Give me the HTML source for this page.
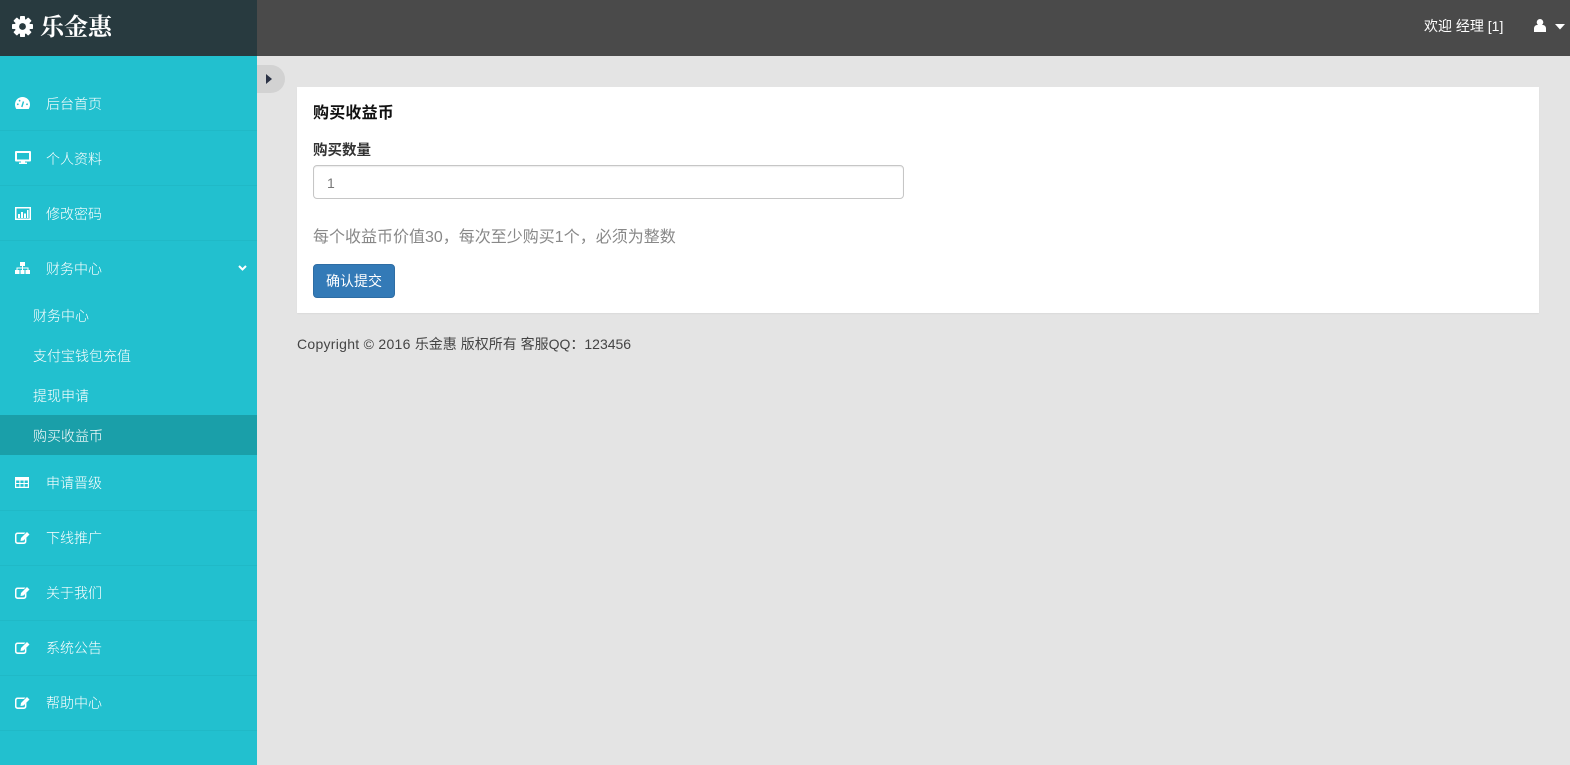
<!DOCTYPE html>
<html lang="zh-CN">
<head>
<meta charset="utf-8">
<title>购买收益币</title>
<style>
html,body{margin:0;padding:0;width:1570px;height:765px;overflow:hidden;background:#e4e4e4;}
body{position:relative;font-family:"Liberation Sans","Noto Sans CJK SC",sans-serif;font-size:14px;font-weight:300;color:#444;}
.a{position:absolute;white-space:nowrap;}
#top{left:257px;top:0;width:1313px;height:56px;background:#4a4a4a;}
#brand{left:0;top:0;width:257px;height:56px;background:#283a3f;}
#brandtext{left:40px;top:11px;font:bold 24px/34px "Liberation Serif","Noto Serif CJK SC",serif;color:#fff;}
#side{left:0;top:56px;width:257px;height:709px;background:#22c0cf;}
.line{left:0;width:257px;height:1px;background:#20b9c7;}
.m{color:#fff;font-size:14px;line-height:20px;left:46px;}
.s{color:#fff;font-size:14px;line-height:20px;left:33px;}
#active{left:0;top:415px;width:257px;height:40px;background:#1a9fa9;}
#toggle{left:257px;top:65px;width:28px;height:28px;background:#d2d2d2;border-radius:0 14px 14px 0;}
#panel{left:297px;top:87px;width:1242px;height:226px;background:#fff;box-shadow:0 1px 1px rgba(0,0,0,.04);}
#input{left:313px;top:165px;width:589px;height:32px;border:1px solid #c6c6c6;border-radius:4px;background:#fff;box-shadow:inset 0 1px 1px rgba(0,0,0,.075);}
#btn{left:313px;top:264px;width:80px;height:32px;background:#337ab7;border:1px solid #2e6da4;border-radius:4px;color:#fff;font-size:14px;font-weight:400;line-height:33px;text-align:center;}
</style>
</head>
<body>
<div class="a" id="top"></div>
<div class="a" id="brand"></div>
<svg class="a" style="left:12px;top:16px" width="21" height="21" viewBox="0 0 21 21"><g fill="#fff"><circle cx="10.500" cy="10.500" r="7.800"/><rect x="8" y="0" width="5" height="21" rx=".8"/><rect x="8" y="0" width="5" height="21" rx=".8" transform="rotate(45 10.500 10.500)"/><rect x="8" y="0" width="5" height="21" rx=".8" transform="rotate(90 10.500 10.500)"/><rect x="8" y="0" width="5" height="21" rx=".8" transform="rotate(135 10.500 10.500)"/></g><circle cx="10.500" cy="10.500" r="3.400" fill="#283a3f"/></svg>
<div class="a" id="brandtext">乐金惠</div>
<div class="a" style="left:1424px;top:16px;color:#fff;font-weight:400;line-height:20px;">欢迎 经理 [1]</div>
<svg class="a" style="left:1534px;top:19px" width="12" height="13" viewBox="0 0 12 13"><circle cx="6" cy="3.300" r="3.300" fill="#fff"/><path d="M0 13V9.500C0 7.500 1.500 6 3 6h6c1.500 0 3 1.500 3 3.500V13z" fill="#fff"/></svg>
<svg class="a" style="left:1555px;top:24px" width="10" height="6" viewBox="0 0 10 6"><path d="M0 0h10L5 5.500z" fill="#fff"/></svg>

<div class="a" id="side"></div>
<div class="a line" style="top:130px"></div>
<div class="a line" style="top:185px"></div>
<div class="a line" style="top:240px"></div>
<div class="a line" style="top:510px"></div>
<div class="a line" style="top:565px"></div>
<div class="a line" style="top:620px"></div>
<div class="a line" style="top:675px"></div>
<div class="a line" style="top:730px"></div>
<div class="a" id="active"></div>

<svg class="a" style="left:15px;top:97px" width="15" height="12" viewBox="0 0 15 12"><path d="M7.500 0C3.300 0 0 3.300 0 7.500c0 1.700.5 3.200 1.300 4.500h12.400c.8-1.300 1.300-2.800 1.300-4.500C15 3.300 11.700 0 7.500 0z" fill="#fff"/><path d="M6.800 10L8.500 4.500" stroke="#22c0cf" stroke-width="1.400"/><circle cx="2.800" cy="7.300" r=".9" fill="#22c0cf"/><circle cx="4.600" cy="3.700" r=".9" fill="#22c0cf"/><circle cx="12" cy="7.300" r=".9" fill="#22c0cf"/></svg>
<div class="a m" style="top:93.500px">后台首页</div>

<svg class="a" style="left:15px;top:151px" width="16" height="13" viewBox="0 0 16 13"><path d="M1 0h14a1 1 0 0 1 1 1v8.500a1 1 0 0 1-1 1H1a1 1 0 0 1-1-1V1a1 1 0 0 1 1-1zM2 2v6.500h12V2z" fill="#fff" fill-rule="evenodd"/><path d="M6 10.500h4v1h2V13H4v-1.500h2z" fill="#fff"/></svg>
<div class="a m" style="top:148.500px">个人资料</div>

<svg class="a" style="left:15px;top:207px" width="16" height="13" viewBox="0 0 16 13"><path d="M0 0h16v13H0zM1.500 1.500v10h13v-10z" fill="#fff" fill-rule="evenodd"/><path d="M3 7h2v4H3zM6 5h2v6H6zM9 6.500h2V11H9zM12 3h1.500v8H12z" fill="#fff"/></svg>
<div class="a m" style="top:203.500px">修改密码</div>

<svg class="a" style="left:15px;top:262px" width="15" height="12" viewBox="0 0 15 12"><path d="M5 0h5v4H8v1.500h5.500V8H15v4h-4.500V8h2V6.500H8V8h1.500v4h-4V8H7V6.500H2.500V8h2v4H0V8h1.500V5.500H7V4H5z" fill="#fff"/></svg>
<div class="a m" style="top:258.500px">财务中心</div>
<svg class="a" style="left:238px;top:265px" width="9" height="6" viewBox="0 0 9 6"><path d="M1 1l3.500 3.500L8 1" stroke="#fff" stroke-width="2" fill="none"/></svg>

<div class="a s" style="top:306px">财务中心</div>
<div class="a s" style="top:346px">支付宝钱包充值</div>
<div class="a s" style="top:386px">提现申请</div>
<div class="a s" style="top:426px">购买收益币</div>

<svg class="a" style="left:15px;top:477px" width="14" height="11" viewBox="0 0 14 11"><path d="M0 0h14v11H0zM1.200 3.500v2.500h3.200V3.500zM5.400 3.500v2.500h3.200V3.500zM9.600 3.500v2.500h3.200V3.500zM1.200 7v2.800h3.200V7zM5.400 7v2.800h3.200V7zM9.600 7v2.800h3.200V7z" fill="#fff" fill-rule="evenodd"/></svg>
<div class="a m" style="top:473px">申请晋级</div>

<svg class="a" style="left:15px;top:531px" width="15" height="13" viewBox="0 0 15 13"><path d="M2.500 1.500h8L9 3H2.700a1.200 1.200 0 0 0-1.200 1.200v6a1.200 1.200 0 0 0 1.200 1.200h6a1.200 1.200 0 0 0 1.200-1.200V8l1.500-1.500v4A2.500 2.500 0 0 1 8.900 13H2.500A2.500 2.500 0 0 1 0 10.500V4a2.500 2.500 0 0 1 2.500-2.500z" fill="#fff"/><path d="M12 1l2.500 2.500-6 6-3 .5.500-3z" fill="#fff"/></svg>
<div class="a m" style="top:528px">下线推广</div>

<svg class="a" style="left:15px;top:586px" width="15" height="13" viewBox="0 0 15 13"><path d="M2.500 1.500h8L9 3H2.700a1.200 1.200 0 0 0-1.200 1.200v6a1.200 1.200 0 0 0 1.200 1.200h6a1.200 1.200 0 0 0 1.200-1.200V8l1.500-1.500v4A2.500 2.500 0 0 1 8.900 13H2.500A2.500 2.500 0 0 1 0 10.500V4a2.500 2.500 0 0 1 2.500-2.500z" fill="#fff"/><path d="M12 1l2.500 2.500-6 6-3 .5.500-3z" fill="#fff"/></svg>
<div class="a m" style="top:583px">关于我们</div>

<svg class="a" style="left:15px;top:641px" width="15" height="13" viewBox="0 0 15 13"><path d="M2.500 1.500h8L9 3H2.700a1.200 1.200 0 0 0-1.200 1.200v6a1.200 1.200 0 0 0 1.200 1.200h6a1.200 1.200 0 0 0 1.200-1.200V8l1.500-1.500v4A2.500 2.500 0 0 1 8.900 13H2.500A2.500 2.500 0 0 1 0 10.500V4a2.500 2.500 0 0 1 2.500-2.500z" fill="#fff"/><path d="M12 1l2.500 2.500-6 6-3 .5.500-3z" fill="#fff"/></svg>
<div class="a m" style="top:638px">系统公告</div>

<svg class="a" style="left:15px;top:696px" width="15" height="13" viewBox="0 0 15 13"><path d="M2.500 1.500h8L9 3H2.700a1.200 1.200 0 0 0-1.200 1.200v6a1.200 1.200 0 0 0 1.200 1.200h6a1.200 1.200 0 0 0 1.200-1.200V8l1.500-1.500v4A2.500 2.500 0 0 1 8.900 13H2.500A2.500 2.500 0 0 1 0 10.500V4a2.500 2.500 0 0 1 2.500-2.500z" fill="#fff"/><path d="M12 1l2.500 2.500-6 6-3 .5.500-3z" fill="#fff"/></svg>
<div class="a m" style="top:693px">帮助中心</div>

<div class="a" id="toggle"></div>
<svg class="a" style="left:266px;top:74px" width="7" height="10" viewBox="0 0 7 10"><path d="M0 0l6 5-6 5z" fill="#2b3245"/></svg>

<div class="a" id="panel"></div>
<div class="a" style="left:313px;top:102px;font-size:16px;font-weight:bold;letter-spacing:.2px;line-height:24px;color:#111;">购买收益币</div>
<div class="a" style="left:313px;top:141px;font-size:14.500px;font-weight:bold;line-height:20px;color:#333;">购买数量</div>
<div class="a" id="input"></div>
<div class="a" style="left:327px;top:173px;line-height:20px;color:#777;">1</div>
<div class="a" style="left:313px;top:226px;font-size:16px;font-weight:400;line-height:24px;color:#888;">每个收益币价值30，每次至少购买1个，必须为整数</div>
<div class="a" id="btn">确认提交</div>
<div class="a" style="left:297px;top:334px;font-weight:400;line-height:20px;color:#444;"><span style="letter-spacing:.28px">Copyright © 2016 </span>乐金惠 版权所有 客服QQ：123456</div>
</body>
</html>
